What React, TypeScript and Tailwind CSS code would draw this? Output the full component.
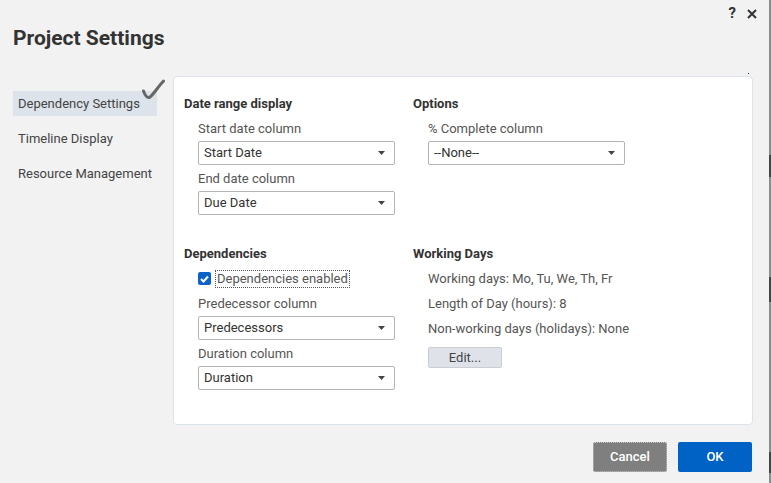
import React from "react";

const font = { fontFamily: "Roboto, 'Liberation Sans', sans-serif" };

function Select({ value }: { value: string }) {
  return (
    <div className="flex h-[24px] w-[197px] items-center justify-between rounded-[2px] border border-[#b4b4b4] bg-white pl-[5px] pr-[9px] text-[13px] text-[#333]">
      <span>{value}</span>
      <svg width="7" height="4" viewBox="0 0 7 4">
        <path d="M0 0 L7 0 L3.5 4 Z" fill="#444" />
      </svg>
    </div>
  );
}

function Heading({ children }: { children: React.ReactNode }) {
  return (
    <div className="flex h-[25px] items-center text-[13px] font-bold text-[#333]">{children}</div>
  );
}

function Label({ children }: { children: React.ReactNode }) {
  return <div className="flex h-[25px] items-center text-[13px] text-[#555]">{children}</div>;
}

export default function App() {
  return (
    <div style={font} className="flex h-[483px] w-[771px] overflow-hidden bg-[#f2f2f2]">
      <div className="flex w-[769px] flex-col">
        {/* top bar */}
        <div className="flex h-[26px] items-center justify-end gap-[11px] pr-[12px] pt-[1px] text-[#333]">
          <span className="text-[15px] font-bold leading-none">?</span>
          <svg width="10" height="10" viewBox="0 0 10 10">
            <path d="M1 1 L9 9 M9 1 L1 9" stroke="#333" strokeWidth="2" />
          </svg>
        </div>
        {/* title */}
        <div className="h-[26px] pl-[13px] text-[21px] font-bold leading-[24px] text-[#333]">
          Project Settings
        </div>

        {/* body */}
        <div className="mt-[24px] flex pl-[13px]">
          {/* nav */}
          <div className="relative mr-[16px] flex w-[144px] flex-col gap-[10px] pt-[15px] text-[13px] text-[#444]">
            <div className="flex h-[25px] items-center bg-[#dde3ea] pl-[5px]">Dependency Settings</div>
            <div className="flex h-[25px] items-center pl-[5px]">Timeline Display</div>
            <div className="flex h-[25px] items-center pl-[5px]">Resource Management</div>
            <svg className="absolute left-[129px] top-[3px]" width="24" height="24" viewBox="0 0 24 24">
              <path
                d="M1.5 12 C3 16 4.5 19 7 18.5 C10 18 14 10 21.5 2"
                stroke="#666"
                strokeWidth="3"
                fill="none"
                strokeLinecap="round"
              />
            </svg>
          </div>

          {/* panel */}
          <div className="relative flex h-[349px] w-[580px] rounded-[4px] border border-[#dde3ea] bg-white pl-[10px] pt-[14px]">
            <span className="absolute right-[3px] top-[-4px] h-[1px] w-[1px] bg-[#333]" />
            {/* left column */}
            <div className="flex w-[229px] flex-col">
              <Heading>Date range display</Heading>
              <div className="flex flex-col pl-[14px]">
                <Label>Start date column</Label>
                <div className="h-[25px]">
                  <Select value="Start Date" />
                </div>
                <Label>End date column</Label>
                <div className="h-[25px]">
                  <Select value="Due Date" />
                </div>
              </div>
              <div className="h-[25px]" />
              <Heading>Dependencies</Heading>
              <div className="flex flex-col pl-[14px]">
                <div className="flex h-[25px] items-center">
                  <span className="flex h-[13px] w-[13px] items-center justify-center rounded-[2px] bg-[#0b63c8]">
                    <svg width="9" height="8" viewBox="0 0 9 8">
                      <path d="M1 4 L3.5 6.5 L8 1.5" stroke="#fff" strokeWidth="2" fill="none" />
                    </svg>
                  </span>
                  <span className="ml-[4px] flex h-[18px] items-center border border-dotted border-[#555] px-[1px] text-[13px] text-[#555]">
                    Dependencies enabled
                  </span>
                </div>
                <Label>Predecessor column</Label>
                <div className="h-[25px]">
                  <Select value="Predecessors" />
                </div>
                <Label>Duration column</Label>
                <div className="h-[25px]">
                  <Select value="Duration" />
                </div>
              </div>
            </div>

            {/* right column */}
            <div className="flex w-[300px] flex-col">
              <Heading>Options</Heading>
              <div className="flex flex-col pl-[15px]">
                <Label>% Complete column</Label>
                <div className="h-[25px]">
                  <Select value="--None--" />
                </div>
              </div>
              <div className="h-[75px]" />
              <Heading>Working Days</Heading>
              <div className="flex flex-col pl-[15px]">
                <Label>Working days: Mo, Tu, We, Th, Fr</Label>
                <Label>Length of Day (hours): 8</Label>
                <Label>Non-working days (holidays): None</Label>
                <div className="mt-[6px] flex h-[21px] w-[74px] items-center justify-center rounded-[2px] border border-[#c9ced5] bg-[#dfe3e9] text-[13px] text-[#444]">
                  Edit...
                </div>
              </div>
            </div>
          </div>
        </div>

        {/* footer */}
        <div className="mt-[17px] flex justify-end gap-[11px] pr-[17px]">
          <div className="flex h-[30px] w-[74px] items-center justify-center rounded-[2px] border border-dotted border-[#c8c8c8] bg-[#7f7f7f] text-[13px] font-medium text-white">
            Cancel
          </div>
          <div className="flex h-[30px] w-[74px] items-center justify-center rounded-[2px] bg-[#0062c4] text-[13px] font-medium text-white">
            OK
          </div>
        </div>
      </div>
      {/* right edge */}
      <div className="flex w-[2px] flex-col bg-[#8c8c8c]">
        <div className="h-[155px]" />
        <div className="h-[22px] bg-[#444]" />
        <div className="h-[100px]" />
        <div className="h-[25px] bg-[#444]" />
        <div className="h-[150px]" />
        <div className="h-[21px] bg-[#444]" />
      </div>
    </div>
  );
}
